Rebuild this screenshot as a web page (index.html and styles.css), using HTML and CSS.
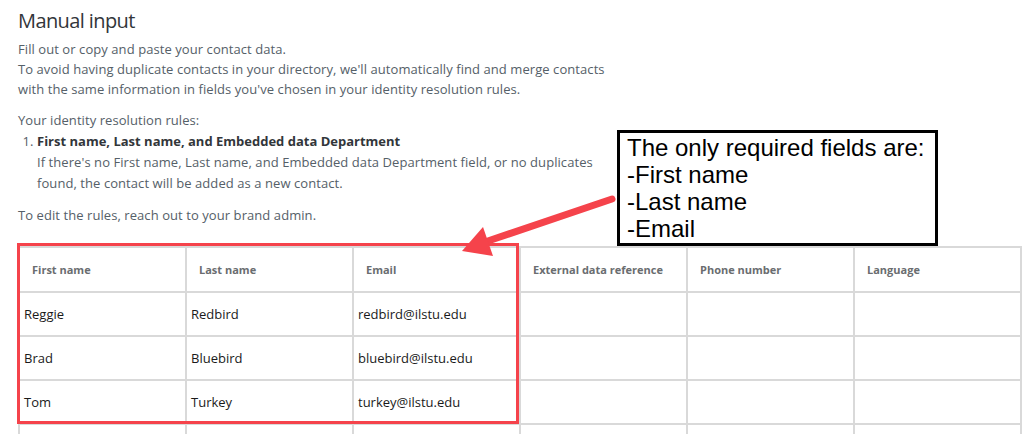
FILE: index.html
```html
<!DOCTYPE html>
<html>
<head>
<meta charset="utf-8">
<link rel="stylesheet" href="styles.css">
</head>
<body>
<div class="page">
  <h1 class="title">Manual input</h1>
  <p class="intro">Fill out or copy and paste your contact data.<br>To avoid having duplicate contacts in your directory, we'll automatically find and merge contacts<br>with the same information in fields you've chosen in your identity resolution rules.</p>
  <div class="rules">
    <div class="rules-label">Your identity resolution rules:</div>
    <ol class="rule-list">
      <li><strong>First name, Last name, and Embedded data Department</strong><br>If there's no First name, Last name, and Embedded data Department field, or no duplicates<br>found, the contact will be added as a new contact.</li>
    </ol>
  </div>
  <p class="edit">To edit the rules, reach out to your brand admin.</p>
  <div class="table-wrap">
    <table class="grid">
      <colgroup>
        <col class="c"><col class="c"><col class="c"><col class="c"><col class="c"><col class="c">
      </colgroup>
      <thead>
        <tr><th>First name</th><th>Last name</th><th>Email</th><th>External data reference</th><th>Phone number</th><th>Language</th></tr>
      </thead>
      <tbody>
        <tr><td>Reggie</td><td>Redbird</td><td>redbird@ilstu.edu</td><td></td><td></td><td></td></tr>
        <tr><td>Brad</td><td>Bluebird</td><td>bluebird@ilstu.edu</td><td></td><td></td><td></td></tr>
        <tr><td>Tom</td><td>Turkey</td><td>turkey@ilstu.edu</td><td></td><td></td><td></td></tr>
        <tr><td></td><td></td><td></td><td></td><td></td><td></td></tr>
      </tbody>
    </table>
    <div class="highlight"></div>
  </div>
</div>
<div class="callout">The only required fields are:<br>-First name<br>-Last name<br>-Email</div>
<svg class="arrow" width="1027" height="434" viewBox="0 0 1027 434">
  <line x1="612" y1="199" x2="482" y2="243" stroke="#f5434b" stroke-width="7" stroke-linecap="round"/>
  <polygon points="462,251 483,227 493,256" fill="#f5434b"/>
</svg>
</body>
</html>
```

FILE: styles.css
```css
html, body {
  margin: 0;
  padding: 0;
  background: #ffffff;
}
body {
  width: 1027px;
  height: 434px;
  overflow: hidden;
  position: relative;
  font-family: "Open Sans", "Noto Sans", sans-serif;
  color: #556068;
}
.page {
  padding-left: 18px;
}
.title {
  margin: 9px 0 0 0;
  font-size: 20px;
  line-height: 24px;
  font-weight: 400;
  letter-spacing: -0.6px;
  color: #32363a;
}
.intro {
  margin: 6px 0 0 0;
  font-size: 13px;
  line-height: 20px;
  letter-spacing: 0.07px;
}
.rules {
  margin-top: 11px;
  font-size: 13px;
  line-height: 21px;
  letter-spacing: 0.07px;
}
.rule-list {
  margin: 0;
  padding-left: 19px;
}
.rule-list strong {
  font-weight: 700;
  color: #32363a;
  letter-spacing: 0;
}
.edit {
  margin: 11px 0 0 0;
  font-size: 13px;
  line-height: 21px;
  letter-spacing: 0.07px;
}
.table-wrap {
  position: relative;
  margin-top: 20px;
  width: 1002px;
}
.grid {
  border-collapse: collapse;
  table-layout: fixed;
  width: 1002px;
}
.grid .c {
  width: 167px;
}
.grid th, .grid td {
  border: 2px solid #d9d9d9;
  text-align: left;
  padding: 0;
  overflow: hidden;
  white-space: nowrap;
}
.grid th {
  height: 43px;
  padding-left: 12px;
  font-size: 11px;
  font-weight: 700;
  color: #6a6d70;
}
.grid td {
  height: 42px;
  padding-left: 4px;
  font-size: 13px;
  color: #1a1a1a;
}
.highlight {
  position: absolute;
  left: -1px;
  top: -3px;
  width: 496px;
  height: 175px;
  border: 3px solid #f5434b;
  pointer-events: none;
}
.callout {
  position: absolute;
  left: 617px;
  top: 130px;
  width: 308px;
  height: 109px;
  padding: 1px 0 0 7px;
  border: 3px solid #000000;
  background: #ffffff;
  font-family: "Liberation Sans", Arial, sans-serif;
  font-size: 24px;
  line-height: 27px;
  color: #000000;
}
.arrow {
  position: absolute;
  left: 0;
  top: 0;
  pointer-events: none;
}
```
